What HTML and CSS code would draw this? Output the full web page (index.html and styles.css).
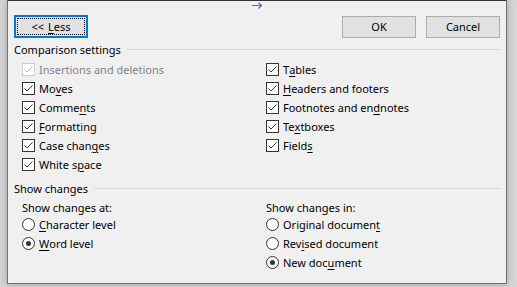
FILE: index.html
```html
<!DOCTYPE html>
<html lang="en">
<head>
    <meta charset="UTF-8">
    <title>Compare Documents</title>
    <link rel="stylesheet" href="styles.css">
</head>
<body>
    <div class="dialog">
        <div class="titlebar">
            <svg class="arrow" width="11" height="7" viewBox="0 0 11 7">
                <path d="M0 3.5 H9.5 M6.5 0.5 L9.5 3.5 L6.5 6.5" fill="none" stroke="#4a6fa5" stroke-width="1.2"/>
            </svg>
        </div>

        <div class="actions">
            <button class="btn btn-focus"><span class="focus-rect"><span>&lt;&lt; <u>L</u>ess</span></span></button>
            <span class="spacer"></span>
            <button class="btn">OK</button>
            <button class="btn">Cancel</button>
        </div>

        <div class="group-title"><span>Comparison settings</span><i class="rule"></i></div>
        <div class="columns">
            <div class="col">
                <label class="opt disabled"><span class="box"><svg viewBox="0 0 11 11"><path d="M1.5 5.5 L4 8 L9.5 2.5" /></svg></span>Insertions and deletions</label>
                <label class="opt"><span class="box"><svg viewBox="0 0 11 11"><path d="M1.5 5.5 L4 8 L9.5 2.5" /></svg></span>Mo<u>v</u>es</label>
                <label class="opt"><span class="box"><svg viewBox="0 0 11 11"><path d="M1.5 5.5 L4 8 L9.5 2.5" /></svg></span>Comme<u>n</u>ts</label>
                <label class="opt"><span class="box"><svg viewBox="0 0 11 11"><path d="M1.5 5.5 L4 8 L9.5 2.5" /></svg></span><u>F</u>ormatting</label>
                <label class="opt"><span class="box"><svg viewBox="0 0 11 11"><path d="M1.5 5.5 L4 8 L9.5 2.5" /></svg></span>Case chan<u>g</u>es</label>
                <label class="opt"><span class="box"><svg viewBox="0 0 11 11"><path d="M1.5 5.5 L4 8 L9.5 2.5" /></svg></span>White s<u>p</u>ace</label>
            </div>
            <div class="col">
                <label class="opt"><span class="box"><svg viewBox="0 0 11 11"><path d="M1.5 5.5 L4 8 L9.5 2.5" /></svg></span>T<u>a</u>bles</label>
                <label class="opt"><span class="box"><svg viewBox="0 0 11 11"><path d="M1.5 5.5 L4 8 L9.5 2.5" /></svg></span><u>H</u>eaders and footers</label>
                <label class="opt"><span class="box"><svg viewBox="0 0 11 11"><path d="M1.5 5.5 L4 8 L9.5 2.5" /></svg></span>Footnotes and en<u>d</u>notes</label>
                <label class="opt"><span class="box"><svg viewBox="0 0 11 11"><path d="M1.5 5.5 L4 8 L9.5 2.5" /></svg></span>Te<u>x</u>tboxes</label>
                <label class="opt"><span class="box"><svg viewBox="0 0 11 11"><path d="M1.5 5.5 L4 8 L9.5 2.5" /></svg></span>Field<u>s</u></label>
            </div>
        </div>

        <div class="group-title group-show"><span>Show changes</span><i class="rule"></i></div>
        <div class="columns">
            <div class="col">
                <div class="sub-title">Show changes at:</div>
                <label class="opt"><span class="radio"></span><u>C</u>haracter level</label>
                <label class="opt"><span class="radio on"></span><u>W</u>ord level</label>
            </div>
            <div class="col">
                <div class="sub-title">Show changes in:</div>
                <label class="opt"><span class="radio"></span>Original documen<u>t</u></label>
                <label class="opt"><span class="radio"></span>Rev<u>i</u>sed document</label>
                <label class="opt"><span class="radio on"></span>New doc<u>u</u>ment</label>
            </div>
        </div>
    </div>
</body>
</html>
```

FILE: styles.css
```css
body {
    margin: 0;
    height: 287px;
    overflow: hidden;
    background: #d6d6d6;
    font-family: "Segoe UI", "Noto Sans", sans-serif;
    font-size: 11px;
    color: #000;
}

.dialog {
    box-sizing: border-box;
    width: 500px;
    height: 284px;
    margin-left: 7px;
    background: #f0f0f0;
    border: 1px solid #707070;
    border-top: 1px solid #333;
    box-shadow: 0 0 8px rgba(0, 0, 0, 0.25);
}

.titlebar {
    height: 14px;
    display: flex;
    justify-content: center;
    align-items: flex-start;
}

.arrow {
    margin-top: 1px;
}

.actions {
    display: flex;
    align-items: center;
    height: 23px;
    padding: 0 6px 0 6px;
}

.spacer {
    flex: 1;
}

.btn {
    box-sizing: border-box;
    width: 74px;
    height: 22px;
    padding: 0;
    background: #e1e1e1;
    border: 1px solid #adadad;
    font: inherit;
    color: #000;
    margin-left: 10px;
}

.btn-focus {
    margin-left: 0;
    height: 23px;
    border: 2px solid #0078d7;
    padding: 1px;
}

.focus-rect {
    display: flex;
    align-items: center;
    justify-content: center;
    height: 100%;
    border: 1px dotted #000;
    box-sizing: border-box;
    word-spacing: 1px;
}

u {
    text-decoration-thickness: 1px;
    text-underline-offset: 2px;
}

.group-title {
    display: flex;
    align-items: center;
    height: 19px;
    margin-top: 2px;
    padding: 0 6px 0 6px;
}

.group-show {
    margin-top: 5px;
}

.rule {
    flex: 1;
    height: 1px;
    background: #d9d9d9;
    margin-left: 6px;
}

.columns {
    display: grid;
    grid-template-columns: 244px 1fr;
    padding-left: 14px;
    margin-top: 1px;
}

.opt {
    display: flex;
    align-items: center;
    height: 19px;
}

.box, .radio {
    box-sizing: border-box;
    width: 13px;
    height: 13px;
    margin-right: 4px;
    border: 1px solid #333;
    background: #fff;
    flex: none;
}

.box svg {
    display: block;
    width: 11px;
    height: 11px;
    fill: none;
    stroke: #333;
    stroke-width: 1;
}

.disabled {
    color: #838383;
}

.disabled .box {
    border-color: #cccccc;
}

.disabled .box svg {
    stroke: #bcbcbc;
}

.radio {
    border-radius: 50%;
    position: relative;
}

.radio.on::after {
    content: "";
    position: absolute;
    left: 3px;
    top: 3px;
    width: 5px;
    height: 5px;
    border-radius: 50%;
    background: #333;
}

.sub-title {
    height: 16px;
    line-height: 18px;
}
```
